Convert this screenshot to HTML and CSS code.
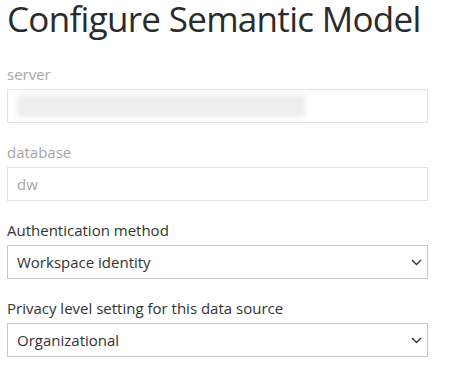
FILE: index.html
```html
<html>
<head>
<title>Configure Semantic Model</title>
<link rel="stylesheet" href="styles.css">
</head>
<body>
<div id="dialog">
	<h1 class="title">Configure Semantic Model</h1>

	<div class="field">
		<div class="label disabled">server</div>
		<div class="input disabled"><div class="blurred"></div></div>
	</div>

	<div class="field">
		<div class="label disabled">database</div>
		<div class="input disabled">dw</div>
	</div>

	<div class="field">
		<div class="label">Authentication method</div>
		<div class="input select">
			<span>Workspace identity</span>
			<svg class="chevron" width="11" height="7" viewBox="0 0 11 7"><path d="M1 1 L5.5 5.5 L10 1" fill="none" stroke="#333" stroke-width="1.4"/></svg>
		</div>
	</div>

	<div class="field">
		<div class="label">Privacy level setting for this data source</div>
		<div class="input select">
			<span>Organizational</span>
			<svg class="chevron" width="11" height="7" viewBox="0 0 11 7"><path d="M1 1 L5.5 5.5 L10 1" fill="none" stroke="#333" stroke-width="1.4"/></svg>
		</div>
	</div>
</div>
</body>
</html>
```

FILE: styles.css
```css
html, body {
	background-color: #ffffff;
	color: #333333;
	padding: 0px;
	margin: 0px;
	font-family: "Open Sans", sans-serif;
}
#dialog {
	width: 421px;
	padding: 0px 0px 0px 7px;
}
.title {
	font-size: 35px;
	font-weight: 400;
	margin: 0px;
	padding-bottom: 27px;
	line-height: 37px;
	letter-spacing: -0.7px;
	white-space: nowrap;
	color: #2b2b2b;
}
.field {
	margin-bottom: 19px;
}
.label {
	font-size: 15px;
	height: 20px;
	line-height: 20px;
	margin-bottom: 5px;
}
.label.disabled {
	color: #a6a6a6;
}
.input {
	box-sizing: border-box;
	height: 34px;
	border: 1px solid #c8c8c8;
	padding: 0px 5px 0px 9px;
	display: flex;
	align-items: center;
	font-size: 15px;
}
.input.disabled {
	border-color: #e3e3e3;
	color: #a6a6a6;
}
.select {
	justify-content: space-between;
}
.blurred {
	width: 288px;
	height: 22px;
	background-color: #eeeeee;
	filter: blur(2px);
}
```
